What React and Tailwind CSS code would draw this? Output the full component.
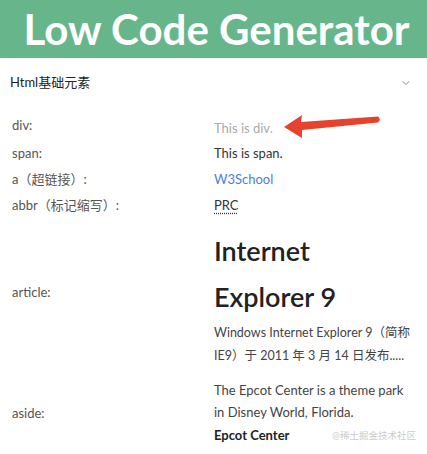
import { ChevronDown } from "lucide-react";

const font = { fontFamily: "Lato, 'Noto Sans CJK SC', sans-serif" };

function Row({ label, children, className = "", labelClass = "" }) {
  return (
    <div className={`flex items-center ${className}`}>
      <div className={`w-[214px] shrink-0 pl-[12px] text-[13px] text-[#555] ${labelClass}`}>
        {label}
      </div>
      <div className="flex-1 text-[13px] text-[#333] whitespace-nowrap">{children}</div>
    </div>
  );
}

function Arrow() {
  return (
    <svg
      className="absolute left-[70px] top-[-5px]"
      width="98"
      height="26"
      viewBox="0 0 98 26"
    >
      <path
        d="M0 13 L18 1 L17 8 L94 2.5 Q97.5 5.5 94 8.5 L18 16 L18 24 Z"
        fill="#e5432d"
        strokeLinejoin="round"
      />
    </svg>
  );
}

export default function App() {
  return (
    <div className="w-[427px] h-[454px] overflow-hidden bg-white" style={font}>
      {/* Title bar */}
      <div className="h-[58px] bg-[#67b68b] flex items-center justify-center">
        <h1 className="text-white font-bold text-[42px] leading-none pl-[6px]">
          Low Code Generator
        </h1>
      </div>

      {/* Collapse header */}
      <div className="h-[50px] flex items-center justify-between pl-[10px] pr-[15px]">
        <span className="text-[13px] text-[#222]">Html基础元素</span>
        <ChevronDown className="w-[12px] h-[12px] text-[#666]" strokeWidth={1.5} />
      </div>

      {/* Rows */}
      <div className="flex flex-col mt-[3px]">
        <Row label="div:" className="h-[30px]">
          <span className="relative inline-block text-[#aaa] mt-[6px]">
            This is div.
            <Arrow />
          </span>
        </Row>
        <Row label="span:" className="h-[26px]">
          This is span.
        </Row>
        <Row label="a（超链接）:" className="h-[26px]">
          <a href="#" className="text-[#4a82d6]">W3School</a>
        </Row>
        <Row label="abbr（标记缩写）:" className="h-[25px]">
          <abbr title="People's Republic of China" className="underline decoration-dotted underline-offset-[3px]">
            PRC
          </abbr>
        </Row>

        <Row label="article:" className="pt-[10px]" labelClass="mb-[10px]">
          <article>
            <h2 className="text-[27px] font-semibold leading-[46px] text-[#222]">
              Internet
              <br />
              Explorer 9
            </h2>
            <p className="text-[12.5px] leading-[23px] text-[#444] mt-[1px]">
              Windows Internet Explorer 9（简称
              <br />
              IE9）于 2011 年 3 月 14 日发布.....
            </p>
          </article>
        </Row>

        <Row label="aside:" className="pt-[12px]" labelClass="mt-[2px]">
          <aside className="relative">
            <p className="text-[13px] leading-[22px] text-[#444]">
              The Epcot Center is a theme park
              <br />
              in Disney World, Florida.
            </p>
            <div className="flex items-center justify-between mt-[3px] pr-[11px]">
              <h4 className="text-[13px] font-bold text-[#222]">Epcot Center</h4>
              <span className="text-[9.5px] text-[#cccccc]">@稀土掘金技术社区</span>
            </div>
          </aside>
        </Row>
      </div>
    </div>
  );
}
